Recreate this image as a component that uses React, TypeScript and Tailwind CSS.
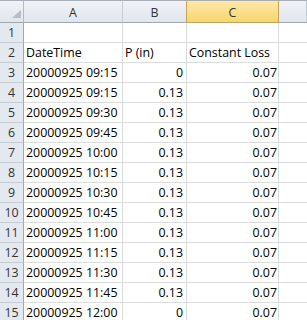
import React from "react";

const times = [
  "09:15", "09:15", "09:30", "09:45", "10:00", "10:15", "10:30",
  "10:45", "11:00", "11:15", "11:30", "11:45", "12:00",
];

const rows: { a: string; b: string; c: string; right: boolean }[] = [
  { a: "", b: "", c: "", right: false },
  { a: "DateTime", b: "P (in)", c: "Constant Loss", right: false },
  ...times.map((t, i) => ({
    a: `20000925 ${t}`,
    b: i === 0 || i === times.length - 1 ? "0" : "0.13",
    c: "0.07",
    right: true,
  })),
];

const cols = "grid grid-cols-[24px_99px_64px_92px_1fr]";

function ColHeader({ label, selected }: { label: string; selected?: boolean }) {
  return (
    <div
      className={
        selected
          ? "flex h-[23px] items-center justify-center border border-t-[#a7adb6] border-x-[#c4a35a] border-b-[#c4a35a] bg-gradient-to-b from-[#fde9a6] to-[#f8d46c] pt-[2px] text-[#333]"
          : "flex h-[23px] items-center justify-center border-t border-b border-r border-t-[#a7adb6] border-b-[#9ea7b3] border-r-[#c6ccd4] bg-gradient-to-b from-[#f0f2f7] to-[#e1e6ed] pt-[2px] text-[#333]"
      }
    >
      {label}
    </div>
  );
}

export default function App() {
  return (
    <div
      className="h-[320px] w-[307px] overflow-hidden bg-white text-[12.4px] leading-[19px] text-black"
      style={{ fontFamily: '"Open Sans", "Liberation Sans", sans-serif' }}
    >
      {/* column headers */}
      <div className={cols}>
        <div className="flex h-[23px] items-end justify-end border-t border-b border-r border-t-[#a7adb6] border-b-[#9ea7b3] border-r-[#b3bac4] bg-gradient-to-b from-[#f0f2f7] to-[#e1e6ed] pb-[4px] pr-[2px]">
          <svg width="9" height="8" viewBox="0 0 9 8">
            <polygon points="9,0 9,8 0,8" fill="#b7bcc5" />
          </svg>
        </div>
        <ColHeader label="A" />
        <ColHeader label="B" />
        <div className="-ml-px w-[calc(100%+1px)]">
          <ColHeader label="C" selected />
        </div>
        <ColHeader label="" />
      </div>

      {rows.map((r, i) => (
        <div key={i} className={cols}>
          <div className="h-[20px] border-b border-r border-b-[#c6ccd4] border-r-[#9ea7b3] bg-[#e4e8ef] text-center text-[#333]">
            {i + 1}
          </div>
          <div className="h-[20px] whitespace-nowrap border-b border-r border-[#dadcdd] pl-[2px]">
            {r.a}
          </div>
          <div
            className={`h-[20px] whitespace-nowrap border-b border-r border-[#dadcdd] ${
              r.right ? "pr-[3px] text-right" : "pl-[2px]"
            }`}
          >
            {r.b}
          </div>
          <div
            className={`h-[20px] whitespace-nowrap border-b border-r border-[#dadcdd] ${
              r.right ? "pr-[1px] text-right" : "pl-[2px]"
            }`}
          >
            {r.c}
          </div>
          <div className="h-[20px] border-b border-[#dadcdd]" />
        </div>
      ))}
    </div>
  );
}
